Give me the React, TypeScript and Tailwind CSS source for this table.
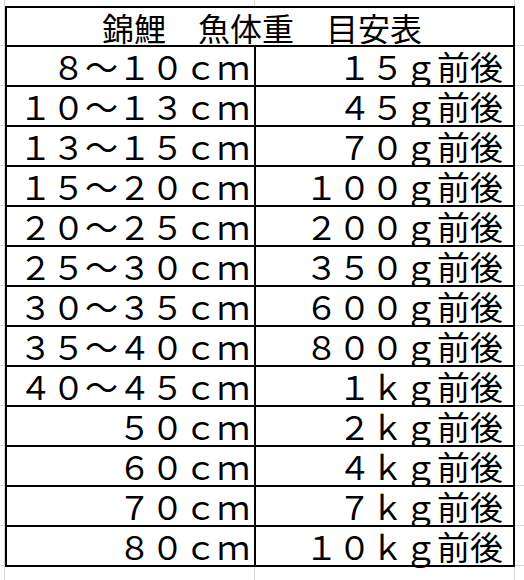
import React from "react";

const rows: [string, string][] = [
  ["８～１０ｃｍ", "１５ｇ前後"],
  ["１０～１３ｃｍ", "４５ｇ前後"],
  ["１３～１５ｃｍ", "７０ｇ前後"],
  ["１５～２０ｃｍ", "１００ｇ前後"],
  ["２０～２５ｃｍ", "２００ｇ前後"],
  ["２５～３０ｃｍ", "３５０ｇ前後"],
  ["３０～３５ｃｍ", "６００ｇ前後"],
  ["３５～４０ｃｍ", "８００ｇ前後"],
  ["４０～４５ｃｍ", "１ｋｇ前後"],
  ["５０ｃｍ", "２ｋｇ前後"],
  ["６０ｃｍ", "４ｋｇ前後"],
  ["７０ｃｍ", "７ｋｇ前後"],
  ["８０ｃｍ", "１０ｋｇ前後"],
];

// faint sheet gridline cells either side of the table
const SideStrip = ({ edge }: { edge: "left" | "right" }) => (
  <div
    className={
      edge === "left"
        ? "flex w-[5px] flex-col border-r border-[#d6d6d6]"
        : "flex flex-1 flex-col"
    }
  >
    <div className="h-[40px] border-b border-[#d6d6d6]" />
    {rows.map((_, i) => (
      <div key={i} className="h-[40px] border-b border-[#d6d6d6]" />
    ))}
  </div>
);

const GapStrip = ({ h }: { h: string }) => (
  <div className={`flex ${h}`}>
    <div className="w-[5px] border-r border-[#d6d6d6]" />
    <div className="w-[250px] border-r border-[#d6d6d6]" />
    <div className="w-[260px] border-r border-[#d6d6d6]" />
    <div className="flex-1" />
  </div>
);

export default function App() {
  return (
    <div
      className="flex h-[580px] w-[524px] flex-col overflow-hidden bg-white text-black"
      style={{ fontFamily: '"Noto Sans CJK JP", "Noto Sans", sans-serif' }}
    >
      <GapStrip h="h-[6px]" />
      <div className="flex">
        <SideStrip edge="left" />
        <div className="grid w-[510px] grid-cols-[247px_257px] gap-[2px] bg-black p-[2px]">
          <div className="col-span-2 flex h-[37px] items-center justify-center bg-white pl-1 text-[32px] leading-none">
            錦鯉　魚体重　目安表
          </div>
          {rows.map(([size, weight]) => (
            <React.Fragment key={size}>
              <div className="flex h-[38px] items-center justify-end whitespace-nowrap bg-white pr-1 text-[33px] leading-none">
                {size}
              </div>
              <div className="flex h-[38px] items-center justify-end whitespace-nowrap bg-white pr-[10px] text-[33px] leading-none">
                {weight}
              </div>
            </React.Fragment>
          ))}
        </div>
        <SideStrip edge="right" />
      </div>
      <GapStrip h="flex-1" />
    </div>
  );
}
